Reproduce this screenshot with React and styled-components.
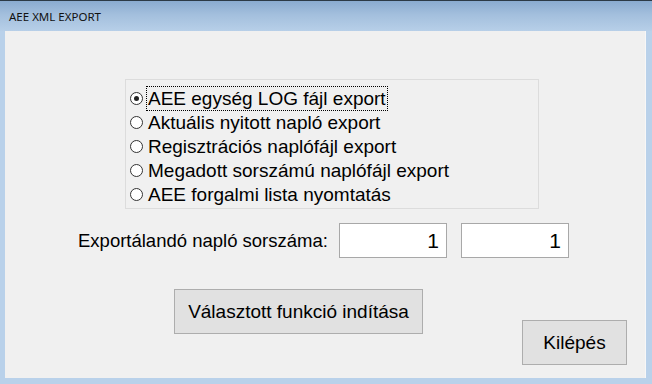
import React from "react";
import styled, { createGlobalStyle } from "styled-components";

const Global = createGlobalStyle`
  html, body { margin: 0; padding: 0; background: #b9d1ea; }
  body { width: 652px; height: 384px; overflow: hidden; }
`;

const Window = styled.div`
  width: 652px;
  height: 384px;
  display: flex;
  flex-direction: column;
  background: #b9d1ea;
  border-top: 1px solid #2c3a46;
  box-sizing: border-box;
`;

const TitleBar = styled.div`
  height: 30px;
  display: flex;
  align-items: center;
  padding-left: 9px;
  padding-top: 1px;
  box-sizing: border-box;
  background: linear-gradient(to bottom, #8aabd0 0%, #a3bfdd 45%, #b7cfe8 100%);
  font-family: "Noto Sans", "Open Sans", sans-serif;
  font-size: 11.5px;
  color: #111;
`;

const Frame = styled.div`
  flex: 1;
  display: flex;
  padding: 0 6px 6px 5px;
`;

const Client = styled.div`
  flex: 1;
  background: #f0f0f0;
  display: flex;
  flex-direction: column;
  font-family: "Liberation Sans", Arial, sans-serif;
  font-size: 19px;
  color: #000;
  border-right: 1px solid #f7f7f7;
`;

const Group = styled.div`
  margin: 48px 0 0 120px;
  width: 414px;
  height: 130px;
  box-sizing: border-box;
  border: 1px solid #dcdcdc;
  padding: 6px 0 0 4px;
  display: flex;
  flex-direction: column;
`;

const RadioRow = styled.label`
  height: 24px;
  display: flex;
  align-items: center;
  gap: 4px;
`;

const RadioDot = styled.span`
  width: 11px;
  height: 11px;
  border-radius: 50%;
  border: 1px solid #333;
  background: #fff;
  display: flex;
  align-items: center;
  justify-content: center;
  flex-shrink: 0;
  &::after {
    content: "";
    width: 5px;
    height: 5px;
    border-radius: 50%;
    background: ${(p) => (p.$checked ? "#222" : "transparent")};
  }
`;

const RadioText = styled.span`
  padding: 1px 1px 0 1px;
  line-height: 22px;
  outline: ${(p) => (p.$focused ? "1px dotted #000" : "none")};
  outline-offset: 0;
`;

const NumberRow = styled.div`
  display: flex;
  align-items: center;
  margin: 14px 0 0 73px;
`;

const Label = styled.span`
  font-size: 18.5px;
  margin-right: 11px;
`;

const NumBox = styled.div`
  width: ${(p) => p.$w}px;
  height: 35px;
  box-sizing: border-box;
  border: 1px solid #a8a8a8;
  background: #fff;
  display: flex;
  align-items: center;
  justify-content: flex-end;
  padding-right: 7px;
  font-size: 21px;
  margin-right: 14px;
`;

const ButtonRow = styled.div`
  display: flex;
  align-items: flex-start;
  margin: 31px 0 0 169px;
`;

const Button = styled.div`
  width: ${(p) => p.$w}px;
  height: 45px;
  box-sizing: border-box;
  border: 1px solid #adadad;
  background: #e1e1e1;
  display: flex;
  align-items: center;
  justify-content: center;
  margin-top: ${(p) => p.$top || 0}px;
  margin-left: ${(p) => p.$left || 0}px;
`;

const options = [
  "AEE egység LOG fájl export",
  "Aktuális nyitott napló export",
  "Regisztrációs naplófájl export",
  "Megadott sorszámú naplófájl export",
  "AEE forgalmi lista nyomtatás",
];

export default function App() {
  return (
    <>
      <Global />
      <Window>
        <TitleBar>AEE XML EXPORT</TitleBar>
        <Frame>
          <Client>
            <Group>
              {options.map((o, i) => (
                <RadioRow key={o}>
                  <RadioDot $checked={i === 0} />
                  <RadioText $focused={i === 0}>{o}</RadioText>
                </RadioRow>
              ))}
            </Group>
            <NumberRow>
              <Label>Exportálandó napló sorszáma:</Label>
              <NumBox $w={108}>1</NumBox>
              <NumBox $w={108}>1</NumBox>
            </NumberRow>
            <ButtonRow>
              <Button $w={249}>Választott funkció indítása</Button>
              <Button $w={105} $top={31} $left={99}>Kilépés</Button>
            </ButtonRow>
          </Client>
        </Frame>
      </Window>
    </>
  );
}
